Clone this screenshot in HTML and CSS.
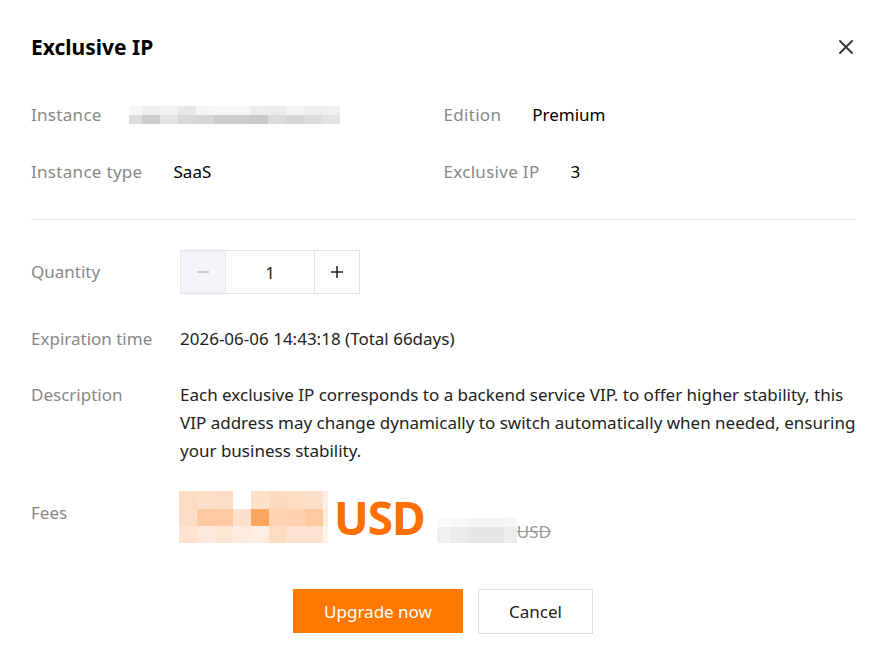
FILE: index.html
```html
<!DOCTYPE html>
<html lang="en">
<head>
<meta charset="utf-8">
<title>Exclusive IP</title>
<link rel="stylesheet" href="styles.css">
</head>
<body>
<div class="dialog">
  <div class="header">
    <h1 class="title">Exclusive IP</h1>
    <button class="close" aria-label="Close">
      <svg width="14" height="14" viewBox="0 0 14 14"><path d="M1 1L13 13M13 1L1 13" stroke="#333" stroke-width="1.8" stroke-linecap="round"/></svg>
    </button>
  </div>

  <div class="info">
    <div class="info-item">
      <span class="label">Instance</span>
      <div class="mosaic mosaic-inst">
        <i style="background:#f6f6f6"></i><i style="background:#eeeeee"></i><i style="background:#f2f2f2"></i><i style="background:#e8e8e8"></i><i style="background:#f5f5f5"></i><i style="background:#f7f7f7"></i><i style="background:#f7f7f7"></i><i style="background:#ececec"></i><i style="background:#ebebeb"></i><i style="background:#f4f4f4"></i><i style="background:#ededed"></i><i style="background:#efefef"></i>
        <i style="background:#dedede"></i><i style="background:#cdcdcd"></i><i style="background:#e4e4e4"></i><i style="background:#d9d9d9"></i><i style="background:#d6d6d6"></i><i style="background:#cdcdcd"></i><i style="background:#cdcdcd"></i><i style="background:#c9c9c9"></i><i style="background:#dcdcdc"></i><i style="background:#d6d6d6"></i><i style="background:#dddddd"></i><i style="background:#e3e3e3"></i>
      </div>
    </div>
    <div class="info-item">
      <span class="label">Edition</span>
      <span class="value">Premium</span>
    </div>
    <div class="info-item">
      <span class="label">Instance type</span>
      <span class="value">SaaS</span>
    </div>
    <div class="info-item">
      <span class="label">Exclusive IP</span>
      <span class="value">3</span>
    </div>
  </div>

  <div class="divider"></div>

  <div class="form">
    <div class="row row-qty">
      <span class="flabel">Quantity</span>
      <div class="stepper">
        <button class="step step-minus" aria-label="Decrease"><svg width="14" height="14" viewBox="0 0 14 14"><path d="M1 7H13" stroke="#b9bcc4" stroke-width="1.5"/></svg></button>
        <span class="step-value">1</span>
        <button class="step step-plus" aria-label="Increase"><svg width="14" height="14" viewBox="0 0 14 14"><path d="M1 7H13M7 1V13" stroke="#222" stroke-width="1.5"/></svg></button>
      </div>
    </div>
    <div class="row">
      <span class="flabel">Expiration time</span>
      <span class="fvalue">2026-06-06 14:43:18 (Total 66days)</span>
    </div>
    <div class="row row-top">
      <span class="flabel">Description</span>
      <p class="fvalue desc">Each exclusive IP corresponds to a backend service VIP. to offer higher stability, this VIP address may change dynamically to switch automatically when needed, ensuring your business stability.</p>
    </div>
    <div class="row row-top row-fees">
      <span class="flabel fees-label">Fees</span>
      <div class="fees">
        <div class="mosaic mosaic-price">
          <i style="background:#fddcc4"></i><i style="background:#fde0c9"></i><i style="background:#fddcc3"></i><i style="background:#ffffff"></i><i style="background:#fde1cb"></i><i style="background:#fddbc2"></i><i style="background:#fddcc4"></i><i style="background:#fde0c9"></i><i style="background:#fef0e6"></i>
          <i style="background:#fdddc6"></i><i style="background:#fec9a3"></i><i style="background:#fec9a3"></i><i style="background:#fee0cb"></i><i style="background:#fea55e"></i><i style="background:#fed3b3"></i><i style="background:#fed1b0"></i><i style="background:#fecaa0"></i><i style="background:#feeede"></i>
          <i style="background:#fee3d0"></i><i style="background:#feeadd"></i><i style="background:#fee6d6"></i><i style="background:#feebde"></i><i style="background:#feede2"></i><i style="background:#fedcc4"></i><i style="background:#fee3d0"></i><i style="background:#fee2cf"></i><i style="background:#fff5ee"></i>
        </div>
        <span class="currency">USD</span>
        <div class="old">
          <div class="mosaic mosaic-old">
            <i style="background:#fafafa"></i><i style="background:#f7f7f7"></i><i style="background:#f3f3f3"></i><i style="background:#f3f3f3"></i><i style="background:#f6f6f6"></i>
            <i style="background:#efefef"></i><i style="background:#ebebeb"></i><i style="background:#e6e6e6"></i><i style="background:#e6e6e6"></i><i style="background:#ececec"></i>
          </div>
          <span class="old-cur">USD</span>
        </div>
      </div>
    </div>
  </div>

  <div class="footer">
    <button class="btn btn-primary">Upgrade now</button>
    <button class="btn btn-default">Cancel</button>
  </div>
</div>
</body>
</html>
```

FILE: styles.css
```css
* { box-sizing: border-box; }
html, body { margin: 0; padding: 0; background: #fff; }
body {
  font-family: "Noto Sans", "Open Sans", Arial, sans-serif;
  font-size: 17px;
  color: #000;
  width: 883px;
  height: 657px;
  overflow: hidden;
}
.dialog { padding: 30px 27px 0 31px; }
.header {
  display: flex;
  justify-content: space-between;
  align-items: center;
  height: 34px;
}
.title { margin: 0; font-size: 21px; font-weight: 700; line-height: 34px; color: #000; }
.close {
  border: 0; background: none; padding: 0; margin-right: 2px;
  width: 16px; height: 16px; display: flex; align-items: center; justify-content: center;
  cursor: pointer;
}
.info {
  margin-top: 37px;
  display: grid;
  grid-template-columns: 1fr 1fr;
  row-gap: 29px;
}
.info-item { display: flex; align-items: center; gap: 31px; height: 28px; }
.label { color: #888; line-height: 28px; letter-spacing: 0.3px; }
.value { color: #000; line-height: 28px; }
.mosaic { display: grid; }
.mosaic i { display: block; }
.mosaic-inst {
  margin-left: -4px;
  grid-template-columns: 13px repeat(11, 18px);
  grid-template-rows: 9px 9px;
}
.divider { height: 1px; background: #ebebeb; margin-top: 33px; }
.form { margin-top: 30px; display: flex; flex-direction: column; }
.row { display: flex; align-items: center; }
.row + .row { margin-top: 31px; }
.row-top { align-items: flex-start; }
.row-top.row-top { margin-top: 28px; }
.row-fees.row-fees { margin-top: 26px; }
.flabel { width: 149px; flex: none; color: #888; line-height: 28px; }
.fvalue { color: #222; line-height: 28px; margin: 0; }
.desc { flex: 1; }
.stepper { display: flex; height: 44px; border: 1px solid #e3e6eb; }
.step {
  border: 0; padding: 0; width: 45px; height: 100%;
  display: flex; align-items: center; justify-content: center; background: #fff;
}
.step-minus { background: #f3f4f7; border-right: 1px solid #e3e6eb; }
.step-plus { border-left: 1px solid #e3e6eb; }
.step-value { width: 88px; display: flex; align-items: center; justify-content: center; color: #222; }
.fees-label { margin-top: 8px; }
.fees { display: flex; align-items: flex-start; }
.mosaic-price {
  margin-left: -1px;
  grid-template-columns: repeat(8, 18px) 5px;
  grid-template-rows: 18px 17px 17px;
}
.currency {
  color: #ff7000;
  font-weight: 700;
  font-size: 46px;
  line-height: 52px;
  margin-left: 6px;
  letter-spacing: -1px;
}
.old { display: flex; align-items: flex-end; margin-left: 12px; margin-top: 27px; }
.mosaic-old {
  grid-template-columns: 13px 18px 18px 18px 13px;
  grid-template-rows: 9px 16px;
}
.old-cur {
  color: #999;
  text-decoration: line-through;
  line-height: 22px;
  font-size: 17px;
}
.footer { display: flex; justify-content: center; gap: 15px; margin-top: 46px; padding-right: 1px; }
.btn {
  height: 45px; font-family: inherit; font-size: 17px; cursor: pointer;
  display: flex; align-items: center; justify-content: center;
}
.btn-primary { width: 170px; background: #ff7800; color: #fff; border: 0; height: 44px; }
.btn-default { width: 115px; background: #fff; color: #222; border: 1px solid #dcdfe6; }
```
